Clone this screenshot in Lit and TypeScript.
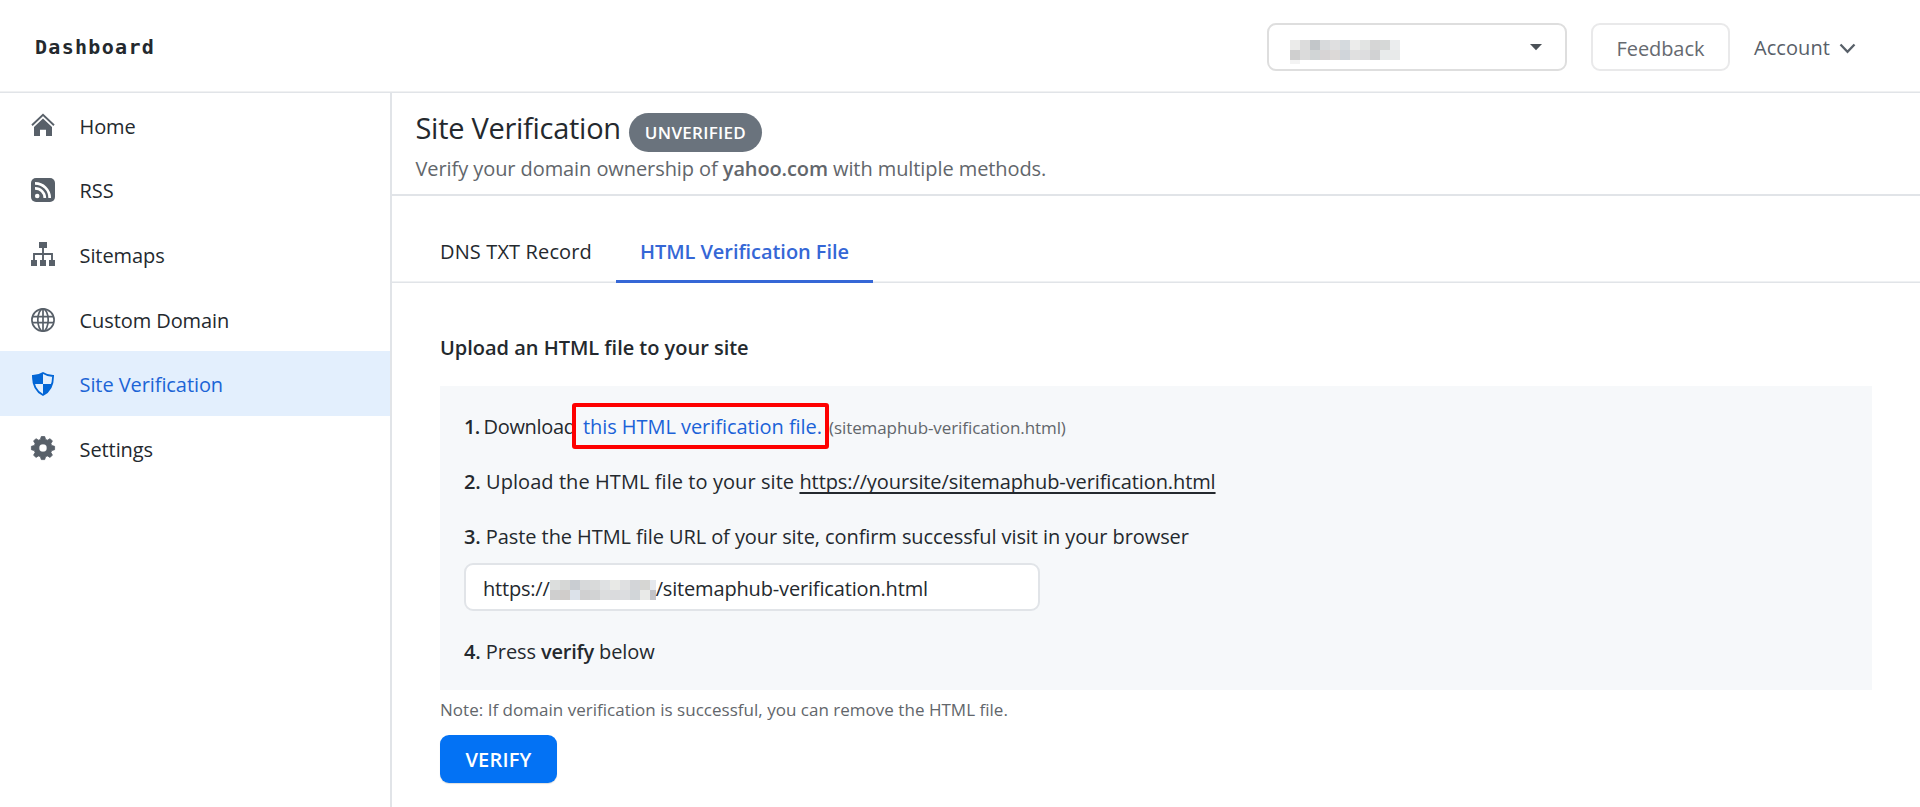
import { LitElement, html, css, svg } from "lit";

const icons = {
  home: svg`<path d="M1 12.2 12 1.8 23 12.2" fill="none" stroke="currentColor" stroke-width="1.9"/>
    <path d="M12 5.6 21 14v9h-6v-6.2H9V23H3v-9z"/>`,
  rss: svg`<rect width="24" height="24" rx="5"/>
    <g fill="none" stroke="#fff" stroke-width="2.7"><path d="M4 5.4A14.6 14.6 0 0 1 18.7 20"/><path d="M4 10.3A9.7 9.7 0 0 1 13.8 20"/></g>
    <circle cx="6.2" cy="18" r="2.3" fill="#fff"/>`,
  sitemap: svg`<path d="M8 0h8v6h-8zM0 18h6v6H0zM9 18h6v6H9zM18 18h6v6h-6z"/>
    <path d="M12 6v12M3 18v-6h18v6" fill="none" stroke="currentColor" stroke-width="1.9"/>`,
  globe: svg`<g fill="none" stroke="currentColor" stroke-width="1.7" transform="translate(0 1)"><circle cx="12" cy="12" r="11.1"/><ellipse cx="12" cy="12" rx="5.2" ry="11.1"/>
    <path d="M1.6 8.6h20.8M1.6 14.6h20.8M12 1v22"/></g>`,
  shield: svg`<path d="M12 1C9 2.9 5.500 4 1.900 4c0 9.500 3 15.500 10.100 19 7.100-3.500 10.100-9.500 10.100-19C18.500 4 15 2.900 12 1z" fill="none" stroke="currentColor" stroke-width="1.800"/>
    <path d="M12 1v11H3C2 9.500 1.600 7 1.500 4 5.500 4 9 2.900 12 1zM12 12h9c-1.500 5-4.500 9-9 11z"/>`,
  gear: svg`<path fill-rule="evenodd" d="M10.300.500h3.400l.9 2.900 1.800.8L19.100 2.700l2.300 2.300-1.500 2.700.8 1.800 2.900.8v3.400l-2.900.9-.8 1.800 1.500 2.700-2.300 2.300-2.700-1.500-1.800.8-.9 2.900h-3.400l-.9-2.900-1.800-.8-2.700 1.500L2.600 19.100l1.500-2.700-.8-1.800L.400 13.700v-3.400l2.900-.8.8-1.800L2.600 5l2.300-2.300 2.700 1.500 1.800-.8zM12 7.900a4.100 4.100 0 1 0 0 8.200 4.100 4.100 0 0 0 0-8.200z" stroke="currentColor" stroke-width=".8" stroke-linejoin="round"/>`,
};

type IconName = keyof typeof icons;

const nav: { icon: IconName; label: string; active?: boolean }[] = [
  { icon: "home", label: "Home" },
  { icon: "rss", label: "RSS" },
  { icon: "sitemap", label: "Sitemaps" },
  { icon: "globe", label: "Custom Domain" },
  { icon: "shield", label: "Site Verification", active: true },
  { icon: "gear", label: "Settings" },
];

// Rows of greys covering the redacted domain names, one colour per 10px cell.
const accountMask = [
  ["#ebebea", "#dcdcdc", "#c2c6c9", "#d8dadc", "#dfdfe0", "#d5dade", "#ececeb", "#e2e4e3", "#d6d6d6", "#d6d8d7", "#ebedee"],
  ["#cfcfcf", "#dbdbdb", "#d1d5d6", "#d7d4d5", "#dcd9d7", "#d0d5da", "#e0e0e0", "#dddddf", "#d1d2d3", "#e8ebeb", "#e8eaea"],
];
const urlMask = [
  ["#dcdedd", "#d6d7d6", "#c9cdd2", "#d7d9da", "#d9dada", "#dfe1e3", "#e8e9e6", "#dfe0e1", "#d3d5d8", "#d6d6d3", "#e5e8ee"],
  ["#cfcfcf", "#d0cdcb", "#dce2ea", "#d0d0d1", "#d2d3d4", "#dcddde", "#dadbdd", "#dcdde0", "#d2d6d9", "#e9eae8", "#c3c3c8"],
];

const mask = (rows: string[][], width: number) => svg`${rows.map((r, y) =>
  r.map((c, x) => svg`<rect x=${x * 10} y=${y * 10} width=${Math.min(10, width - x * 10)} height="10" fill=${c}/>`)
)}`;

class AppRoot extends LitElement {
  static styles = css`
    :host { display: block; height: 807px; overflow: hidden; background: #fff; color: #24292e; font: 20px/30px "Open Sans", "Noto Sans", sans-serif; letter-spacing: -0.08px; }
    * { box-sizing: border-box; }
    svg { display: block; flex: none; shape-rendering: auto; }
    b { font-weight: 600; }
    .page { display: grid; grid-template: 93px 1fr / 392px 1fr; height: 100%; }
    header { grid-column: 1 / 3; display: flex; align-items: flex-start; padding: 23px 64px 0 35px; border-bottom: 1px solid #e1e4e8; box-shadow: inset 0 -1px #f0f1f2; }
    .brand { flex: 1; padding-top: 9px; font: 700 20px/30px "DejaVu Sans Mono", monospace; letter-spacing: 1.3px; }
    .select { display: flex; justify-content: space-between; width: 300px; height: 48px; padding: 15px 23px 0 21px; border: 2px solid #dedede; border-radius: 9px; }
    .caret { margin-top: 3px; }
    .feedback { width: 139px; height: 48px; margin: 0 24px; padding-top: 9px; border: 2px solid #e9e9ea; border-radius: 9px; text-align: center; color: #666a70; }
    .account { display: flex; gap: 9px; padding-top: 10px; color: #586069; letter-spacing: 0.08px; }
    .chevron { margin-top: 9px; }
    aside { border-right: 2px solid #e1e4e8; }
    .item { display: flex; align-items: center; gap: 24.5px; height: 64.6px; padding-left: 31px; }
    .item svg { color: #586069; overflow: visible; }
    .item span { padding-top: 3px; letter-spacing: -0.08px; }
    .active { background: #e3effd; color: #1c64d6; }
    .active svg { color: #0366d6; }
    .head { height: 103px; padding: 18px 23.5px 0; border-bottom: 2px solid #e1e4e8; }
    .title { display: flex; gap: 8px; }
    h1 { margin: 0; font-size: 29px; font-weight: 400; line-height: 34px; letter-spacing: -0.28px; }
    .badge { height: 39px; margin-top: 2px; padding: 0 16px; border-radius: 20px; background: #6a737d; color: #fff; font-size: 17px; font-weight: 600; line-height: 39px; letter-spacing: 0.3px; }
    .sub { margin-top: 2px; color: #62666b; letter-spacing: -0.08px; }
    .sub b { letter-spacing: -0.12px; }
    .tabs { display: flex; height: 87px; padding-left: 24px; border-bottom: 1px solid #e1e4e8; box-shadow: inset 0 -1px #eff1f3; }
    .tab { height: 87px; padding: 41px 24px 0; letter-spacing: 0.13px; }
    .tab.on { width: 257px; border-bottom: 3px solid #3567d6; color: #3567d6; font-weight: 600; letter-spacing: -0.06px; white-space: nowrap; }
    .body { padding: 50px 48px 0; }
    h2 { margin: 0; font-size: 20px; font-weight: 600; line-height: 30px; letter-spacing: -0.02px; }
    .panel { height: 304px; margin-top: 23px; padding: 26px 24px 0; background: #f6f8fa; }
    .step { height: 30px; margin-bottom: 25px; white-space: nowrap; }
    .step.tight { margin-bottom: 11px; }
    .step b { letter-spacing: -0.25px; }
    .step .num { letter-spacing: -0.1px; }
    .step .first { letter-spacing: -0.8px; }
    .get { margin-left: -1px; letter-spacing: -0.3px; }
    .wide { letter-spacing: 0.07px; }
    .link { position: relative; margin: 0 7px 0 2px; color: #1b62d8; letter-spacing: -0.05px; }
    .mark { position: absolute; left: -11px; top: -10px; width: 257px; height: 46px; border: 4px solid #fe0000; border-radius: 3px; }
    small { font-size: 17px; color: #62666b; }
    .url { color: #24292e; text-decoration: underline; text-decoration-thickness: 2px; text-underline-offset: 3px; text-decoration-skip-ink: none; letter-spacing: -0.1px; }
    .field { display: flex; width: 576px; height: 48px; margin-bottom: 26px; padding: 9px 17px 0; border: 2px solid #e1e4e8; border-radius: 9px; background: #fff; }
    .field .pre { letter-spacing: -0.2px; }
    .field .post { letter-spacing: -0.16px; }
    .field svg { margin-top: 6px; }
    .note { margin-top: 6px; font-size: 17px; line-height: 28px; color: #62666b; letter-spacing: 0.02px; }
    button { display: block; width: 117px; height: 48px; margin-top: 11px; padding: 2px 0 0; border: 0; border-radius: 9px; background: #0372f4; box-shadow: 0 1px 1px rgba(27, 31, 35, 0.15); color: #fff; font: 600 20px/46px "Open Sans", sans-serif; letter-spacing: 0.2px; }
  `;

  render() {
    return html`<div class="page">
      <header>
        <div class="brand">Dashboard</div>
        <div class="select">
          <svg width="110" height="24">${mask(accountMask, 110)}<rect y="20" width="10" height="4" fill="#f3f3f3"/></svg>
          <svg class="caret" width="12" height="8"><path d="M0 1h12L6 7.200z" fill="#4b5157"/></svg>
        </div>
        <div class="feedback">Feedback</div>
        <div class="account">Account<svg class="chevron" width="17" height="13"><path d="M1.500 2.500 8.500 9.800 15.500 2.500" fill="none" stroke="#586069" stroke-width="2.300"/></svg></div>
      </header>
      <aside>
        ${nav.map((n) => html`<div class="item ${n.active ? "active" : ""}">
          <svg width="24" height="24" viewBox="0 0 24 24" fill="currentColor">${icons[n.icon]}</svg><span>${n.label}</span>
        </div>`)}
      </aside>
      <main>
        <div class="head">
          <div class="title"><h1>Site Verification</h1><span class="badge">UNVERIFIED</span></div>
          <div class="sub">Verify your domain ownership of <b>yahoo.com</b> with multiple methods.</div>
        </div>
        <div class="tabs"><div class="tab">DNS TXT Record</div><div class="tab on">HTML Verification File</div></div>
        <div class="body">
          <h2>Upload an HTML file to your site</h2>
          <div class="panel">
            <div class="step"><b class="first">1.</b> <span class="get">Download</span> <span class="link">this HTML verification file.<i class="mark"></i></span><small>(sitemaphub-verification.html)</small></div>
            <div class="step wide"><b class="num">2.</b> Upload the HTML file to your site <a class="url">https://yoursite/sitemaphub-verification.html</a></div>
            <div class="step tight"><b class="num">3.</b> Paste the HTML file URL of your site, confirm successful visit in your browser</div>
            <div class="field"><span class="pre">https://</span><svg width="106" height="20">${mask(urlMask, 106)}</svg><span class="post">/sitemaphub-verification.html</span></div>
            <div class="step"><b class="num">4.</b> Press <b>verify</b> below</div>
          </div>
          <div class="note">Note: If domain verification is successful, you can remove the HTML file.</div>
          <button>VERIFY</button>
        </div>
      </main>
    </div>`;
  }
}
customElements.define("app-root", AppRoot);
